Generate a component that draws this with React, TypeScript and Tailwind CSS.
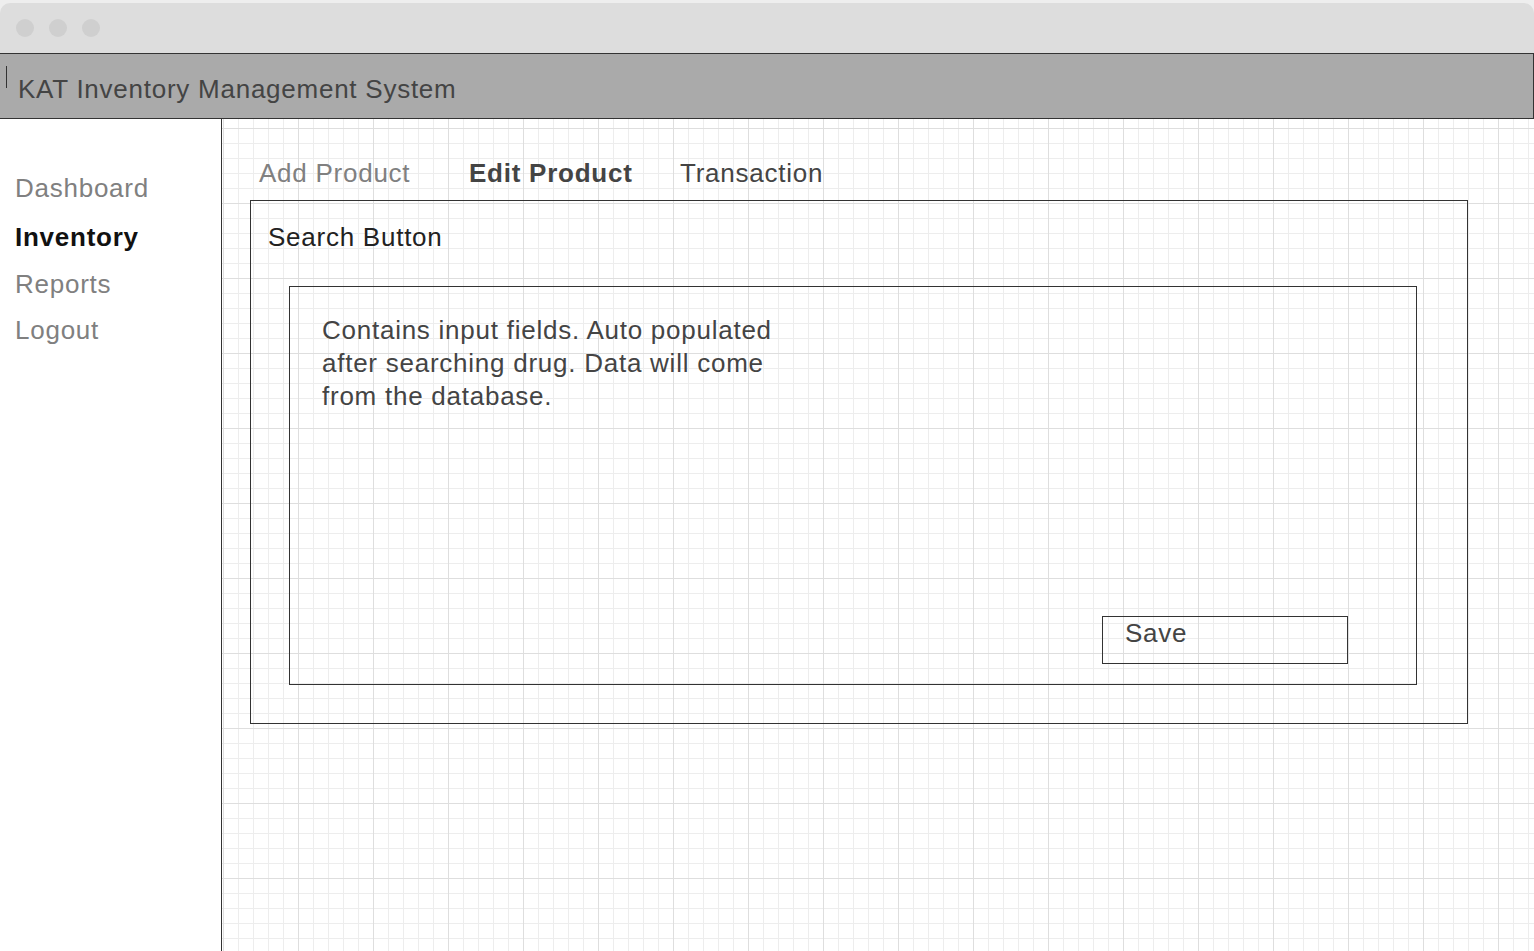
// Wireframe: KAT inventory – Edit Product screen
const navItems = [
  { label: "Dashboard", active: false, mt: "mt-[53px]" },
  { label: "Inventory", active: true, mt: "mt-[17px]" },
  { label: "Reports", active: false, mt: "mt-[15px]" },
  { label: "Logout", active: false, mt: "mt-[14px]" },
];

const tabs = [
  { label: "Add Product", className: "w-[210px] text-[#808080]" },
  { label: "Edit Product", className: "w-[211px] font-bold text-[#444444]" },
  { label: "Transaction", className: "text-[#444444]" },
];

function WindowBar() {
  return (
    <div className="mt-[3px] flex h-[50px] items-center gap-[15px] rounded-t-[10px] bg-[#dddddd] pl-[16px]">
      <span className="h-[18px] w-[18px] rounded-full bg-[#cfcfcf]" />
      <span className="h-[18px] w-[18px] rounded-full bg-[#cfcfcf]" />
      <span className="h-[18px] w-[18px] rounded-full bg-[#cfcfcf]" />
    </div>
  );
}

function AppHeader() {
  return (
    <header className="flex h-[66px] items-start border-y border-r border-[#333333] bg-[#aaaaaa]">
      <span className="ml-[6px] mt-[12px] h-[22px] w-px bg-[#333333]" />
      <h1 className="ml-[11px] mt-[19px] text-[26px] leading-[32px] tracking-[0.75px] text-[#444444]">
        KAT Inventory Management System
      </h1>
    </header>
  );
}

function Sidebar() {
  return (
    <nav className="flex w-[222px] shrink-0 flex-col border-r border-[#333333] bg-white pl-[15px]">
      {navItems.map((item) => (
        <a
          key={item.label}
          className={`${item.mt} text-[26px] leading-[32px] tracking-[0.75px] ${
            item.active ? "font-bold text-[#111111]" : "text-[#808080]"
          }`}
        >
          {item.label}
        </a>
      ))}
    </nav>
  );
}

export default function App() {
  return (
    <div className="h-[951px] w-[1534px] overflow-hidden bg-[#eeeeee] font-['Liberation_Sans',Arial,sans-serif]">
      <WindowBar />
      <AppHeader />

      <div className="flex h-[832px]">
        <Sidebar />

        <main className="flex-1 bg-white bg-[image:linear-gradient(to_right,#dedede_1px,transparent_1px),linear-gradient(to_bottom,#dedede_1px,transparent_1px),linear-gradient(to_right,#ededed_1px,transparent_1px),linear-gradient(to_bottom,#ededed_1px,transparent_1px)] bg-[size:75px_75px,75px_75px,15px_15px,15px_15px] bg-[position:1px_9px]">
          <div className="ml-[37px] mt-[38px] flex text-[26px] leading-[32px] tracking-[0.75px]">
            {tabs.map((tab) => (
              <button key={tab.label} className={`text-left ${tab.className}`}>
                {tab.label}
              </button>
            ))}
          </div>

          <section className="ml-[28px] mt-[11px] h-[524px] w-[1218px] border border-[#333333]">
            <div className="ml-[17px] mt-[20px] text-[26px] leading-[32px] tracking-[0.75px] text-[#222222]">
              Search Button
            </div>

            <div className="ml-[38px] mt-[33px] flex h-[399px] w-[1128px] flex-col border border-[#333333]">
              <p className="ml-[32px] mt-[27px] text-[26px] leading-[33px] tracking-[0.75px] text-[#444444]">
                Contains input fields. Auto populated
                <br />
                after searching drug. Data will come
                <br />
                from the database.
              </p>

              <button className="mb-[20px] ml-[812px] mt-auto h-[48px] w-[246px] border border-[#333333] pl-[22px] pt-px text-left">
                <span className="block text-[26px] leading-[30px] tracking-[0.75px] text-[#444444]">
                  Save
                </span>
                <span className="block h-[15px]" />
              </button>
            </div>
          </section>
        </main>
      </div>
    </div>
  );
}
